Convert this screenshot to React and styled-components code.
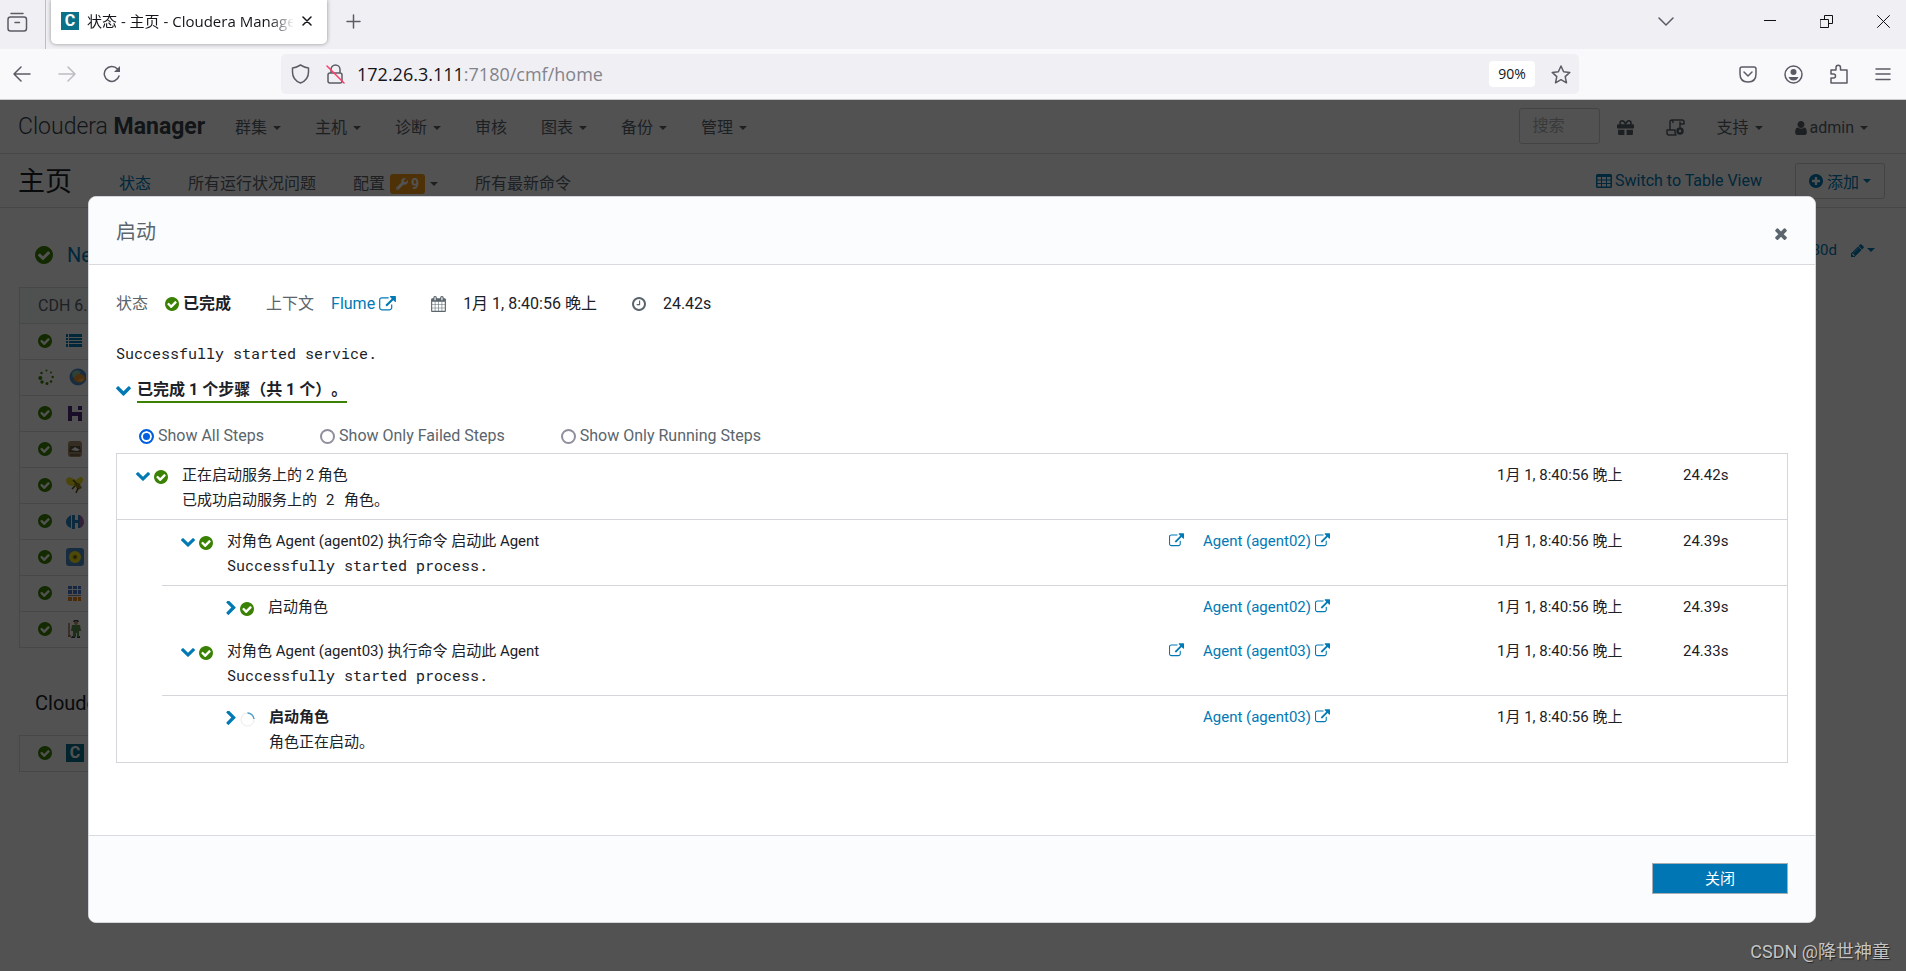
import React, { useState } from 'react'
import styled, { createGlobalStyle } from 'styled-components';
import { FaWrench, FaGift } from 'react-icons/fa';

const GlobalStyle = createGlobalStyle`
    *{
        box-sizing:border-box;
    }
    body{
        margin:0;
        font-family: Roboto, 'Noto Sans CJK SC', sans-serif;
        font-size:16px;
        line-height:24px;
        color:#1b2127;
    }
    a{
        color:#0079b5;
        text-decoration:none;
    }
    button, input{
        font-family:inherit;
        font-size:inherit;
    }
    svg{
        display:block;
        flex:none;
    }
`;

/* ---------- icons ---------- */

const CIRCLE = 'M1664 896q0 209-103 385.5t-279.5 279.5-385.5 103-385.5-103-279.5-279.5-103-385.5 103-385.5 279.5-279.5 385.5-103 385.5 103 279.5 279.5 103 385.5z';
const paths = {
    check: 'M1412 734q0-28-18-46l-91-90q-19-19-45-19t-45 19l-408 407-226-226q-19-19-45-19t-45 19l-91 90q-18 18-18 46 0 27 18 45l362 362q19 19 45 19 27 0 46-19l543-543q18-18 18-45z' + CIRCLE,
    plus: 'M1344 960v-128q0-26-19-45t-45-19h-256v-256q0-26-19-45t-45-19h-128q-26 0-45 19t-19 45v256h-256q-26 0-45 19t-19 45v128q0 26 19 45t45 19h256v256q0 26 19 45t45 19h128q26 0 45-19t19-45v-256h256q26 0 45-19t19-45z' + CIRCLE,
    clock: 'M1024 544v448q0 14-9 23t-23 9h-320q-14 0-23-9t-9-23v-64q0-14 9-23t23-9h224v-352q0-14 9-23t23-9h64q14 0 23 9t9 23zm416 352q0-148-73-273t-198-198-273-73-273 73-198 198-73 273 73 273 198 198 273 73 273-73 198-198 73-273z' + CIRCLE,
    external: 'M1408 928v320q0 119-84.5 203.5t-203.5 84.5h-832q-119 0-203.5-84.5t-84.5-203.5v-832q0-119 84.5-203.5t203.5-84.5h704q14 0 23 9t9 23v64q0 14-9 23t-23 9h-704q-66 0-113 47t-47 113v832q0 66 47 113t113 47h832q66 0 113-47t47-113v-320q0-14 9-23t23-9h64q14 0 23 9t9 23zm384-864v512q0 26-19 45t-45 19-45-19l-176-176-652 652q-10 10-23 10t-23-10l-114-114q-10-10-10-23t10-23l652-652-176-176q-19-19-19-45t19-45 45-19h512q26 0 45 19t19 45z',
    down: 'M1683 808l-742 741q-19 19-45 19t-45-19l-742-741q-19-19-19-45.5t19-45.5l166-165q19-19 45-19t45 19l531 531 531-531q19-19 45-19t45 19l166 165q19 19 19 45.5t-19 45.5z',
    right: 'M1363 877l-742 742q-19 19-45 19t-45-19l-166-166q-19-19-19-45t19-45l531-531-531-531q-19-19-19-45t19-45l166-166q19-19 45-19t45 19l742 742q19 19 19 45t-19 45z',
    times: 'M1490 1322q0 40-28 68l-136 136q-28 28-68 28t-68-28l-294-294-294 294q-28 28-68 28t-68-28l-136-136q-28-28-28-68t28-68l294-294-294-294q-28-28-28-68t28-68l136-136q28-28 68-28t68 28l294 294 294-294q28-28 68-28t68 28l136 136q28 28 28 68t-28 68l-294 294 294 294q28 28 28 68z',
    calendar: 'M192 1664h288v-288h-288v288zm352 0h320v-288h-320v288zm-352-352h288v-320h-288v320zm352 0h320v-320h-320v320zm-352-384h288v-288h-288v288zm736 736h320v-288h-320v288zm-384-736h320v-288h-320v288zm768 736h288v-288h-288v288zm-384-352h320v-320h-320v320zm-352-864v-288q0-13-9.5-22.5t-22.5-9.5h-64q-13 0-22.5 9.5t-9.5 22.5v288q0 13 9.5 22.5t22.5 9.5h64q13 0 22.5-9.5t9.5-22.5zm736 864h288v-320h-288v320zm-384-384h320v-288h-320v288zm384 0h288v-288h-288v288zm32-480v-288q0-13-9.5-22.5t-22.5-9.5h-64q-13 0-22.5 9.5t-9.5 22.5v288q0 13 9.5 22.5t22.5 9.5h64q13 0 22.5-9.5t9.5-22.5zm384-64v1280q0 52-38 90t-90 38h-1408q-52 0-90-38t-38-90v-1280q0-52 38-90t90-38h128v-96q0-66 47-113t113-47h64q66 0 113 47t47 113v96h384v-96q0-66 47-113t113-47h64q66 0 113 47t47 113v96h128q52 0 90 38t38 90z',
    user: 'M1536 1399q0 109-62.5 187t-150.5 78h-854q-88 0-150.5-78t-62.5-187q0-85 8.5-160.5t31.5-152 58.5-131 94-89 134.5-34.5q131 128 313 128t313-128q76 0 134.5 34.5t94 89 58.5 131 31.5 152 8.5 160.5zm-256-887q0 159-112.5 271.5t-271.5 112.5-271.5-112.5-112.5-271.5 112.5-271.5 271.5-112.5 271.5 112.5 112.5 271.5z',
    pencil: 'M491 1536l91-91-235-235-91 91v107h128v128h107zm523-928q0-22-22-22-10 0-17 7l-542 542q-7 7-7 17 0 22 22 22 10 0 17-7l542-542q7-7 7-17zm-54-192l416 416-832 832h-416v-416zm683 96q0 53-37 90l-166 166-416-416 166-165q36-38 90-38 53 0 91 38l235 234q37 39 37 91z',
};

// the glyphs do not fill the 1792 grid, so each one is cropped to its own box
const boxes = {
    check: '128 128 1536 1536',
    plus: '128 128 1536 1536',
    clock: '128 128 1536 1536',
    external: '0 0 1792 1600',
    down: '90 430 1612 1240',
    right: '346 110 1036 1536',
    times: '300 338 1190 1216',
    calendar: '64 0 1664 1792',
    user: '256 128 1280 1536',
    pencil: '128 128 1536 1536',
};

function Glyph({ name, w = 14, h = 14, color }) {
    return (
        <svg width={w} height={h} viewBox={boxes[name]} fill={color || 'currentColor'} fillRule="evenodd">
            <path d={paths[name]} />
        </svg>
    )
}

const LineSvg = styled.svg.attrs({ fill: 'none', stroke: 'currentColor' })`
    stroke-width:${props => props.$line || 1.5};
    stroke-linecap:round;
    stroke-linejoin:round;
`;

const TableIcon = () => (
    <svg width="16" height="14" viewBox="0 0 16 14">
        <path fillRule="evenodd" fill="currentColor" d="M1.500 0h13q1.500 0 1.500 1.500v11q0 1.500-1.500 1.500h-13q-1.500 0-1.500-1.500v-11q0-1.500 1.500-1.500zM1.500 3v2.500h3.500v-2.500zM6 3v2.500h4v-2.500zM11 3v2.500h3.500v-2.500zM1.500 6.500v2.500h3.500v-2.500zM6 6.500v2.500h4v-2.500zM11 6.500v2.500h3.500v-2.500zM1.500 10v2.500h3.500v-2.500zM6 10v2.500h4v-2.500zM11 10v2.500h3.500v-2.500z" />
    </svg>
);

const ScrollIcon = () => (
    <LineSvg width="19" height="17" viewBox="0 0 19 17">
        <path d="M4 11V3q0-2 2-2h10q2 0 2 2v2h-4M14 3v5M6 1.500q1 0 1 2M1 11h8v2q0 2 1 3H3q-2 0-2-2z" />
        <circle cx="14" cy="12" r="2.500" strokeWidth="2.500" />
    </LineSvg>
);

const Dots = () => (
    <svg width="16" height="16" viewBox="0 0 16 16" fill="#3b8204">
        <circle cx="2.300" cy="9" r="2" /><circle cx="4" cy="13" r="1.700" /><circle cx="9" cy="14.500" r="1.500" />
        <circle cx="13" cy="12.500" r="1.300" /><circle cx="14.700" cy="8" r="1.200" /><circle cx="13" cy="3.500" r="1" />
        <circle cx="8.500" cy="1.500" r="1" /><circle cx="3.500" cy="4" r="1.200" />
    </svg>
);

const Spinner = () => (
    <svg width="15" height="15" viewBox="0 0 15 15" fill="none">
        <circle cx="7.500" cy="7.500" r="6.500" stroke="#ebebeb" />
        <path d="M7.500 1A6.500 6.500 0 0 1 14 7" stroke="#4fa0cc" strokeWidth="1.500" />
    </svg>
);

const serviceIcons = {
    hosts: <g fill="#0079b5"><path d="M0 2h2v3H0zM3 2h13v3H3zM0 6h2v2H0zM3 6h13v2H3zM0 9h2v2H0zM3 9h13v2H3zM0 12h2v3H0zM3 12h13v3H3z" /></g>,
    flume: <g><circle cx="10" cy="9" r="8.500" fill="#4b8ac9" /><path d="M4 5q4-5 9-1l-3 4-5 2z" fill="#94c8a8" /><path d="M6 12q0-5 5-6 6 0 6 5-3 5-8 3z" fill="#f0932b" /><path d="M10 12l6-2-2 4z" fill="#ffc04d" /></g>,
    hive: <g fill="#522a7c"><path d="M2 2h4v6h10v9h-4v-5H6v5H2zM12 2h4v4h-4z" /></g>,
    oozie: <g><rect x="2" y="1" width="14" height="16" rx="3" fill="#a58c68" /><path d="M4 6h10l1 6H3z" fill="#5f533f" /><path d="M5 10l4-3 5 3-3 1z" fill="#fff" /><path d="M4 14h10v2H4z" fill="#7c6748" /></g>,
    bee: <g><path d="M0 4q1-4 6-2l4 2 4-3q4 0 3 4l-3 4-6 1q-8 0-8-6z" fill="#e5d61c" /><path d="M8 8l5-1 3 5-4 2z" fill="#8c7c10" /><path d="M9 10l-3 3M12 12l-2 5M7 4l4 4" stroke="#53480b" strokeWidth="1.500" /></g>,
    hue: <g><path d="M5 3v13Q0 14 0 10t5-7zM6 3h3v5h3V3h2v13h-2v-5H9v6H6z" fill="#2680bd" /><path d="M14 3q4 3 4 7t-4 6z" fill="#9a6ab5" /></g>,
    impala: <g><rect width="18" height="18" rx="3" fill="#4c88c7" /><circle cx="9" cy="9" r="6" fill="#f1e21a" /><circle cx="9" cy="9" r="2" fill="#4c5a2b" stroke="#b8a600" /></g>,
    blocks: <g><path d="M2 2h4v3H2zM7 2h4v3H7zM12 2h3v3h-3zM2 6h4v4H2zM7 6h4v4H7zM12 6h3v4h-3z" fill="#477bd1" /><path d="M2 11h13v1H2z" fill="#888" /><path d="M2 13h4v4H2zM7 13h4v4H7zM12 13h3v4h-3z" fill="#f08418" /></g>,
    keeper: <g><path d="M8 0h4l1 2H7zM6 16h3v2H5zM11 16h3v2h-3z" fill="#39404a" /><circle cx="10" cy="3" r="2" fill="#c99264" /><path d="M6 5h8l1 6h-2v6h-2v-4h-1v4H7v-6H5z" fill="#5b9150" /><path d="M3 3v14M2 16h3" stroke="#a07050" strokeWidth="1.500" /></g>,
};

/* ---------- browser chrome ---------- */

const Page = styled.div`
    min-height:100vh;
    display:flex;
    flex-direction:column;
`;

const TabBar = styled.div`
    height:49px;
    display:flex;
    background:#f0f0f4;
    color:#5b5b66;
    font-family:'Open Sans', 'Noto Sans CJK SC', sans-serif;
`;

const ViewButton = styled.button`
    width:46px;
    padding:0 0 5px 7px;
    border:0;
    border-right:1px solid #bcbcc2;
    background:none;
    color:inherit;
`;

const Tab = styled.div`
    width:276px;
    height:44px;
    margin-left:5px;
    padding:0 15px 2px 10px;
    display:flex;
    align-items:center;
    gap:8px;
    background:#fff;
    color:#15141a;
    font-size:15px;
    border-radius:0 0 5px 5px;
    box-shadow:0 0 4px rgba(0,0,0,0.4);
`;

const TabTitle = styled.span`
    flex:1;
    overflow:hidden;
    white-space:nowrap;
    mask-image:linear-gradient(to left, transparent, #000 24px);
`;

const Logo = styled.span`
    width:18px;
    height:18px;
    display:flex;
    align-items:center;
    justify-content:center;
    background:#0a7189;
    color:#fff;
    font:bold 16px/18px Roboto, sans-serif;
`;

const PlainButton = styled.button`
    padding:0;
    border:0;
    background:none;
    color:inherit;
    line-height:0;
`;

const WindowButtons = styled.div`
    flex:1;
    height:42px;
    padding:0 16px 0 19px;
    display:flex;
    align-items:center;
    gap:44px;
    button:nth-child(2){
        margin-left:auto;
        margin-right:46px;
    }
`;

const Toolbar = styled.div`
    height:51px;
    padding:0 15px 0 13px;
    display:flex;
    align-items:center;
    background:#f9f9fb;
    border-bottom:1px solid #cccccf;
    color:#5b5b66;
    font-family:'Open Sans', sans-serif;
`;

const NavButtons = styled.div`
    width:268px;
    display:flex;
    gap:27px;
`;

const UrlBar = styled.div`
    flex:1;
    height:40px;
    padding:0 8px 0 10px;
    display:flex;
    align-items:center;
    gap:16px;
    border-radius:5px;
    background:#f0f0f4;
`;

const Url = styled.div`
    flex:1;
    margin-left:-4px;
    font-size:18px;
    color:#83838b;
    b{
        font-weight:400;
        color:#15141a;
    }
`;

const Zoom = styled.button`
    width:46px;
    height:26px;
    padding:0 0 2px;
    border:0;
    border-radius:4px;
    background:#fff;
    color:#15141a;
    font-size:14px;
`;

const ToolButtons = styled.div`
    padding-left:160px;
    display:flex;
    align-items:center;
    gap:27px;
`;

/* ---------- Cloudera Manager page ---------- */

const AppArea = styled.div`
    flex:1;
    position:relative;
    background:#fff;
    overflow:hidden;
`;

const Bar = styled.div`
    height:54px;
    padding:0 ${props => props.$right}px 0 18px;
    display:flex;
    align-items:center;
    border-bottom:1px solid #dcdcdc;
    color:#5a656d;
`;

const Brand = styled.div`
    width:217px;
    font-size:23px;
    font-weight:300;
    color:#3a4249;
    b{
        font-weight:700;
    }
`;

const Menu = styled.nav`
    flex:1;
    padding-top:${props => props.$top}px;
    display:flex;
    align-items:center;
    gap:${props => props.$gap}px;
`;

const MenuLink = styled.a`
    display:flex;
    align-items:center;
    gap:${props => props.$gap || 6}px;
    color:${props => props.$active ? '#0079b5' : '#5a656d'};
`;

const Caret = styled.span`
    border:4px solid transparent;
    border-top-color:currentColor;
    border-bottom:0;
`;

const Search = styled.input`
    width:81px;
    height:36px;
    margin-bottom:4px;
    padding:0 13px;
    border:1px solid #d0d0d0;
    border-radius:3px;
    background:#fff;
    &::placeholder{
        color:#b0b4b8;
    }
`;

const NavTools = styled.div`
    padding-top:${props => props.$top || 0}px;
    display:flex;
    align-items:center;
    gap:${props => props.$gap}px;
    color:#5a656d;
`;

const Title = styled.h1`
    width:101px;
    margin:0;
    padding-top:2px;
    font-size:27px;
    font-weight:400;
    line-height:48px;
    color:#1b2127;
`;

const Badge = styled.span`
    height:20px;
    padding:0 6px;
    display:flex;
    align-items:center;
    gap:3px;
    border-radius:3px;
    background:#f69a1b;
    color:#fff;
    font-size:14px;
    font-weight:700;
`;

const AddButton = styled.button`
    height:36px;
    padding:0 13px 0 13px;
    display:flex;
    align-items:center;
    gap:4px;
    border:1px solid #d0d0d0;
    border-radius:3px;
    background:#fff;
    color:#0079b5;
`;

const Status = styled.div`
    display:flex;
    justify-content:space-between;
    padding:28px 31px 20px 19px;
`;

const ClusterColumn = styled.div`
    width:46%;
`;

const ClusterTitle = styled.h2`
    margin:0;
    padding:2px 16px 0;
    display:flex;
    align-items:center;
    gap:14px;
    font-size:20px;
    font-weight:400;
    line-height:34px;
`;

const ServiceTable = styled.table`
    width:100%;
    margin:15px 0 36px;
    border-collapse:collapse;
    border:1px solid #dcdcdc;
    th, td{
        height:36px;
        padding:0 18px;
        border:1px solid #dcdcdc;
        border-width:1px 0;
        text-align:left;
    }
    td{
        padding-bottom:2px;
    }
    th{
        background:#f5f8f9;
        color:#5a656d;
        font-weight:400;
    }
`;

const Service = styled.div`
    display:flex;
    align-items:center;
    gap:14px;
`;

const Range = styled.div`
    display:flex;
    align-items:center;
    gap:14px;
    height:28px;
    font-size:15px;
`;

/* ---------- command dialog ---------- */

const Backdrop = styled.div`
    position:absolute;
    inset:0;
    padding:96px 90px 48px 88px;
    background:rgba(0,0,0,0.68);
`;

const Dialog = styled.div`
    border:1px solid #d2d5d9;
    border-radius:8px;
    background:#fff;
    overflow:hidden;
`;

const DialogHeader = styled.header`
    height:68px;
    padding:2px 28px 0 27px;
    display:flex;
    align-items:center;
    justify-content:space-between;
    background:#fafcfe;
    border-bottom:1px solid #d8dadd;
    color:#5a656d;
    h3{
        margin:0;
        font-size:20px;
        font-weight:400;
    }
    button{
        padding-top:4px;
    }
`;

const DialogBody = styled.div`
    padding:27px 27px 72px;
`;

const Summary = styled.div`
    margin-bottom:25px;
    display:flex;
    align-items:center;
    color:#5a656d;
    > *{
        margin-right:17px;
    }
`;

const Value = styled.span`
    display:flex;
    align-items:center;
    gap:4px;
    color:#1b2127;
    font-weight:${props => props.$bold ? 700 : 400};
    && {
        margin-right:35px;
    }
`;

const Message = styled.pre`
    margin:0;
    font-family:'Roboto Mono', 'Liberation Mono', 'Noto Sans CJK SC', monospace;
    font-size:15px;
    line-height:24px;
`;

const StepsToggle = styled.button`
    margin:14px 0 21px;
    padding:0;
    display:flex;
    align-items:center;
    gap:6px;
    border:0;
    background:none;
    color:#0079b5;
    span{
        border-bottom:2px solid #3b8204;
        color:#1b2127;
        font-weight:700;
        line-height:22px;
        text-spacing-trim:space-all;
    }
`;

const Filters = styled.div`
    padding-left:23px;
    display:flex;
    gap:56px;
    color:#5a656d;
    label{
        display:flex;
        align-items:center;
        gap:4px;
    }
`;

const Radio = styled.input.attrs({ type: 'radio' })`
    appearance:none;
    width:15px;
    height:15px;
    margin:0;
    border:2px solid #8f8f9d;
    border-radius:50%;
    background:#fff;
    &:checked{
        border-color:#0060df;
        background:#0060df;
        box-shadow:inset 0 0 0 2px #fff;
    }
`;

const Steps = styled.table`
    width:100%;
    margin-top:5px;
    table-layout:fixed;
    border-collapse:separate;
    border-spacing:0;
    border:1px solid #d4d6da;
    font-size:15px;
    td{
        padding:0;
        vertical-align:top;
    }
`;

const StepRow = styled.tr`
    td{
        height:${props => props.$tall ? 66 : 44}px;
        padding-top:9px;
        border-bottom:${props => props.$line ? '1px solid #d4d6da' : '0'};
    }
    td:first-child{
        border-bottom:${props => props.$level === 0 ? '1px solid #d4d6da' : '0'};
    }
`;

const Step = styled.div`
    padding-left:${props => props.$level === 2 ? 64 : 19}px;
    display:flex;
    gap:4px;
    color:#1b2127;
    font-weight:${props => props.$bold ? 700 : 400};
`;

const StepIcon = styled.span`
    height:${props => props.$green ? 28 : 26}px;
    display:flex;
    align-items:center;
    color:${props => props.$green ? '#3b8204' : '#0079b5'};
`;

const StepText = styled.div`
    padding-left:10px;
    ${Message}{
        font-weight:400;
    }
`;

const AgentLink = styled.a`
    height:24px;
    display:flex;
    align-items:center;
    gap:4px;
    svg{
        margin-bottom:2px;
    }
`;

const DialogFooter = styled.footer`
    height:87px;
    padding:0 27px;
    display:flex;
    align-items:center;
    justify-content:flex-end;
    background:#fafcfe;
    border-top:1px solid #d8dadd;
`;

const CloseButton = styled.button`
    width:136px;
    height:31px;
    margin-bottom:2px;
    padding:0 0 2px;
    border:1px solid #a8adb1;
    background:#0076b5;
    color:#fff;
    font-size:15px;
`;

const Watermark = styled.div`
    position:absolute;
    right:16px;
    bottom:7px;
    color:#c4c4c4;
    font-size:18px;
    text-shadow:1px 1px 1px #222;
`;

const menu = [['群集', true], ['主机', true], ['诊断', true], ['审核', false], ['图表', true], ['备份', true], ['管理', true]];
const services = ['hosts', 'flume', 'hive', 'oozie', 'bee', 'hue', 'impala', 'blocks', 'keeper'];
const filters = ['Show All Steps', 'Show Only Failed Steps', 'Show Only Running Steps'];
const time = '1月 1, 8:40:56 晚上';

const steps = [
    { level: 0, open: true, tall: true, line: true, name: '正在启动服务上的 2 角色', note: '已成功启动服务上的 2 角色。', took: '24.42s' },
    { level: 1, open: true, tall: true, line: true, name: '对角色 Agent (agent02) 执行命令 启动此 Agent', note: 'Successfully started process.', agent: 'Agent (agent02)', took: '24.39s' },
    { level: 2, name: '启动角色', agent: 'Agent (agent02)', took: '24.39s' },
    { level: 1, open: true, tall: true, line: true, name: '对角色 Agent (agent03) 执行命令 启动此 Agent', note: 'Successfully started process.', agent: 'Agent (agent03)', took: '24.33s' },
    { level: 2, tall: true, running: true, name: '启动角色', note: '角色正在启动。', agent: 'Agent (agent03)', took: '' },
];

function Browser() {
    return (
        <>
            <TabBar>
                <ViewButton aria-label="Firefox View">
                    <LineSvg width="21" height="20" viewBox="0 0 21 20"><path d="M4 1.500h12M3 5h14q2.500 0 2.500 2.500v9q0 2.500-2.500 2.500H3.500Q1 19 1 16.500v-9Q1 5 3.500 5zM8 10.500h4.500" /></LineSvg>
                </ViewButton>
                <Tab>
                    <Logo>C</Logo>
                    <TabTitle>状态 - 主页 - Cloudera Manager</TabTitle>
                    <PlainButton aria-label="Close tab">
                        <LineSvg width="10" height="10" viewBox="0 0 10 10"><path d="M1 1l8 8M9 1l-8 8" /></LineSvg>
                    </PlainButton>
                </Tab>
                <WindowButtons>
                    <PlainButton aria-label="New tab">
                        <LineSvg width="15" height="15" viewBox="0 0 15 15"><path d="M7.500 1v13M1 7.500h13" /></LineSvg>
                    </PlainButton>
                    <PlainButton aria-label="List tabs">
                        <LineSvg width="16" height="9" viewBox="0 0 16 9"><path d="M1 1l7 7 7-7" /></LineSvg>
                    </PlainButton>
                    <PlainButton aria-label="Minimize">
                        <LineSvg $line={1} width="12" height="13" viewBox="0 0 12 13" color="#111"><path d="M0 5.500h12" /></LineSvg>
                    </PlainButton>
                    <PlainButton aria-label="Restore">
                        <LineSvg $line={1} width="13" height="13" viewBox="0 0 13 13" color="#111"><path d="M.5 4.500h8v8h-8zM4.500 4V.5h8v8H9" /></LineSvg>
                    </PlainButton>
                    <PlainButton aria-label="Close">
                        <LineSvg $line={1} width="13" height="13" viewBox="0 0 13 13" color="#111"><path d="M.5.5l12 12M12.500.5l-12 12" /></LineSvg>
                    </PlainButton>
                </WindowButtons>
            </TabBar>
            <Toolbar>
                <NavButtons>
                    <PlainButton aria-label="Back">
                        <LineSvg width="18" height="16" viewBox="0 0 18 16"><path d="M17 8H1M8 1L1 8l7 7" /></LineSvg>
                    </PlainButton>
                    <PlainButton aria-label="Forward" disabled>
                        <LineSvg width="18" height="16" viewBox="0 0 18 16" color="#bcbcc2"><path d="M1 8h16M10 1l7 7-7 7" /></LineSvg>
                    </PlainButton>
                    <PlainButton aria-label="Reload">
                        <LineSvg width="18" height="18" viewBox="0 0 18 18"><path d="M16 11a7.500 7.500 0 1 1-1.500-7" /><path d="M17 1v6h-6z" fill="currentColor" stroke="none" /></LineSvg>
                    </PlainButton>
                </NavButtons>
                <UrlBar>
                    <LineSvg width="19" height="20" viewBox="0 0 19 20"><path d="M9.500 1q4 2.500 8 3v4q0 8-8 11-8-3-8-11V4q4-.500 8-3z" /></LineSvg>
                    <LineSvg width="19" height="20" viewBox="0 0 19 20"><path d="M5 8V5.500a4.500 4.500 0 0 1 9 0V8M4 9h10q2 0 2 2v6q0 2-2 2H4q-2 0-2-2v-6q0-2 2-2z" /><path d="M1 2l17 17" stroke="#ff3b6b" /></LineSvg>
                    <Url><b>172.26.3.111</b>:7180/cmf/home</Url>
                    <Zoom>90%</Zoom>
                    <LineSvg width="20" height="19" viewBox="0 0 20 19"><path d="M10 1l2.600 5.700 6.200.700-4.600 4.200 1.300 6.200L10 14.700l-5.500 3.100 1.300-6.200L1.200 7.400l6.200-.700z" /></LineSvg>
                </UrlBar>
                <ToolButtons>
                    <LineSvg width="18" height="17" viewBox="0 0 18 17"><path d="M3 1h12q2 0 2 2v5q0 8-8 8T1 8V3q0-2 2-2zM5 6l4 4 4-4" /></LineSvg>
                    <LineSvg width="19" height="19" viewBox="0 0 19 19"><circle cx="9.500" cy="9.500" r="8.500" /><circle cx="9.500" cy="7" r="3" fill="currentColor" stroke="none" /><path d="M4.500 12h10q-1.500 3.500-5 3.500t-5-3.500z" fill="currentColor" stroke="none" /></LineSvg>
                    <LineSvg width="18" height="20" viewBox="0 0 18 20"><path d="M1 6h5V3.500a2.200 2.200 0 0 1 4.500 0V6H17v13H1v-5h2.500a2 2 0 0 0 0-4H1z" /></LineSvg>
                    <LineSvg width="16" height="13" viewBox="0 0 16 13"><path d="M1 1h14M1 6h14M1 11.500h14" /></LineSvg>
                </ToolButtons>
            </Toolbar>
        </>
    )
}

function Background() {
    return (
        <>
            <Bar $right={38}>
                <Brand>Cloudera <b>Manager</b></Brand>
                <Menu $gap={34} $top={2}>
                    {menu.map(([label, drop]) => (
                        <MenuLink href="#" key={label}>{label}{drop && <Caret />}</MenuLink>
                    ))}
                </Menu>
                <NavTools $gap={32} $top={2}>
                    <NavTools $gap={17}>
                        <Search placeholder="搜索" aria-label="搜索" />
                        <FaGift size={17} />
                    </NavTools>
                    <ScrollIcon />
                    <MenuLink href="#">支持<Caret /></MenuLink>
                    <MenuLink href="#"><NavTools $gap={3}><Glyph name="user" w={12} h={14} />admin</NavTools><Caret /></MenuLink>
                </NavTools>
            </Bar>
            <Bar $right={21}>
                <Title>主页</Title>
                <Menu $gap={37} $top={6}>
                    <MenuLink href="#" $active>状态</MenuLink>
                    <MenuLink href="#">所有运行状况问题</MenuLink>
                    <MenuLink href="#" $gap={5}>配置<Badge><FaWrench size={12} />9</Badge><Caret /></MenuLink>
                    <MenuLink href="#">所有最新命令</MenuLink>
                </Menu>
                <NavTools $gap={33}>
                    <MenuLink href="#" $active $gap={3}><TableIcon />Switch to Table View</MenuLink>
                    <AddButton><Glyph name="plus" />添加<Caret /></AddButton>
                </NavTools>
            </Bar>
            <Status>
                <ClusterColumn>
                    <ClusterTitle><Glyph name="check" w={18} h={18} color="#3b8204" /><a href="#">New</a></ClusterTitle>
                    <ServiceTable>
                        <thead><tr><th>CDH 6.3</th></tr></thead>
                        <tbody>
                            {services.map(name => (
                                <tr key={name}>
                                    <td>
                                        <Service>
                                            {name === 'flume' ? <Dots /> : <Glyph name="check" color="#3b8204" />}
                                            <svg width="18" height="18" viewBox="0 0 18 18">{serviceIcons[name]}</svg>
                                        </Service>
                                    </td>
                                </tr>
                            ))}
                        </tbody>
                    </ServiceTable>
                    <ClusterTitle>Cloudera</ClusterTitle>
                    <ServiceTable>
                        <tbody>
                            <tr><td><Service><Glyph name="check" color="#3b8204" /><Logo>C</Logo></Service></td></tr>
                        </tbody>
                    </ServiceTable>
                </ClusterColumn>
                <Range>
                    <a href="#">30d</a>
                    <MenuLink href="#" $active $gap={3}><Glyph name="pencil" w={13} h={13} /><Caret /></MenuLink>
                </Range>
            </Status>
        </>
    )
}

function StepLine({ step }) {
    const icon = step.open ? <Glyph name="down" w={14} h={11} /> : <Glyph name="right" w={10} h={14} />;
    return (
        <StepRow $tall={step.tall} $line={step.line} $level={step.level}>
            {step.level > 0 && <td></td>}
            <td colSpan={step.level > 0 ? 1 : 2}>
                <Step $level={step.level} $bold={step.running}>
                    <StepIcon>{icon}</StepIcon>
                    <StepIcon $green>{step.running ? <Spinner /> : <Glyph name="check" />}</StepIcon>
                    <StepText>
                        {step.name}
                        {step.note && <Message>{step.note}</Message>}
                    </StepText>
                </Step>
            </td>
            <td>{step.level === 1 && <AgentLink href="#" aria-label="Open command"><Glyph name="external" w={15} h={14} /></AgentLink>}</td>
            <td>{step.agent && <AgentLink href="#">{step.agent}<Glyph name="external" w={15} h={14} /></AgentLink>}</td>
            <td>{time}</td>
            <td>{step.took}</td>
        </StepRow>
    )
}

function CommandDialog() {
    const [filter, setFilter] = useState(filters[0]);
    return (
        <Dialog role="dialog" aria-label="启动">
            <DialogHeader>
                <h3>启动</h3>
                <PlainButton aria-label="Close"><Glyph name="times" w={12} h={12} /></PlainButton>
            </DialogHeader>
            <DialogBody>
                <Summary>
                    <span>状态</span>
                    <Value $bold><Glyph name="check" color="#3b8204" />已完成</Value>
                    <span>上下文</span>
                    <Value><AgentLink href="#">Flume<Glyph name="external" w={17} h={15} /></AgentLink></Value>
                    <Glyph name="calendar" w={15} h={16} />
                    <Value>{time}</Value>
                    <Glyph name="clock" />
                    <Value>24.42s</Value>
                </Summary>
                <Message>Successfully started service.</Message>
                <StepsToggle><Glyph name="down" w={15} h={12} /><span>已完成 1 个步骤（共 1 个）。</span></StepsToggle>
                <Filters>
                    {filters.map(name => (
                        <label key={name}>
                            <Radio name="steps" checked={filter === name} onChange={() => setFilter(name)} />
                            {name}
                        </label>
                    ))}
                </Filters>
                <Steps>
                    <colgroup>
                        <col style={{ width: 45 }} />
                        <col />
                        <col style={{ width: 34 }} />
                        <col style={{ width: 294 }} />
                        <col style={{ width: 186 }} />
                        <col style={{ width: 104 }} />
                    </colgroup>
                    <tbody>
                        {steps.map((step, i) => <StepLine step={step} key={i} />)}
                    </tbody>
                </Steps>
            </DialogBody>
            <DialogFooter>
                <CloseButton>关闭</CloseButton>
            </DialogFooter>
        </Dialog>
    )
}

function App() {
    return (
        <Page>
            <GlobalStyle />
            <Browser />
            <AppArea>
                <Background />
                <Backdrop>
                    <CommandDialog />
                </Backdrop>
                <Watermark>CSDN @降世神童</Watermark>
            </AppArea>
        </Page>
    )
}

export default App
